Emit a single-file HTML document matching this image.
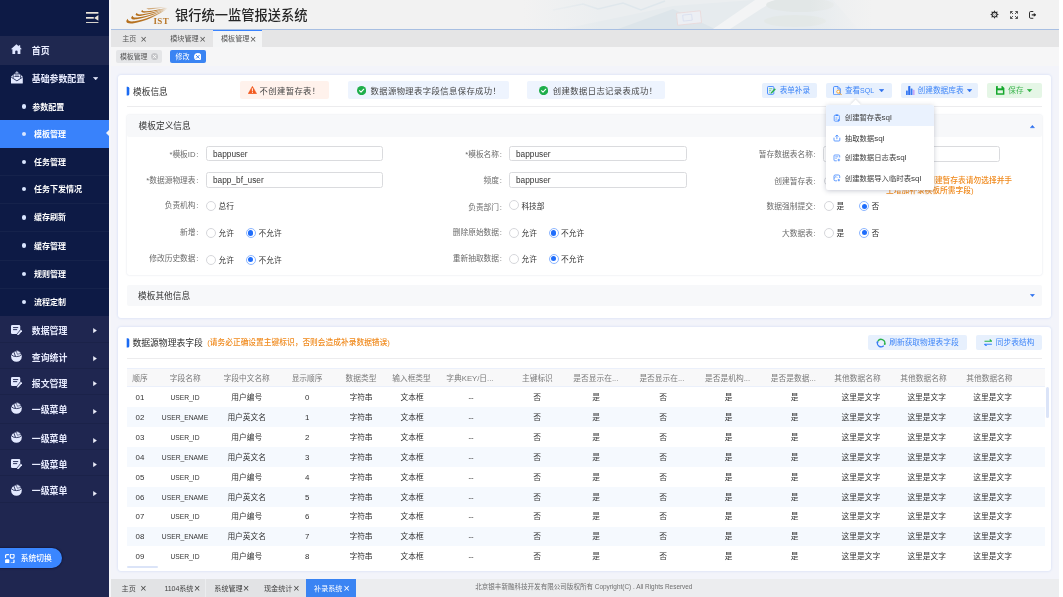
<!DOCTYPE html>
<html lang="zh-CN">
<head>
<meta charset="utf-8">
<title>银行统一监管报送系统</title>
<style>
*{box-sizing:border-box;margin:0;padding:0}
html,body{width:1063px;height:597px;overflow:hidden;background:#fff}
body{font-family:"Liberation Sans","Noto Sans CJK SC",sans-serif;color:#333;font-size:7.72px;line-height:1}
#page{position:absolute;left:0;top:0;width:1058.6px;height:597px;background:#f3f4fa;overflow:hidden;will-change:transform;opacity:.999}
.abs{position:absolute}
.t{position:absolute;white-space:nowrap;line-height:12px;height:12px;margin-top:-6px}
.c{transform:translateX(-50%)}
.r{transform:translateX(-100%)}
/* sidebar */
#side{position:absolute;left:0;top:0;width:109.1px;height:597px;background:#1f2650}
#side .dark{position:absolute;left:0;width:109.1px;background:#0d1a45}
#side .m{color:#e8ecff;font-weight:bold;font-size:8.9px}
#side .s{color:#fff;font-weight:bold;font-size:8px;left:33.9px}
#side .dot{position:absolute;left:21.7px;width:4.4px;height:4.4px;border-radius:50%;background:#d9e5ff;margin-top:-2.2px}
#side .sep{position:absolute;left:0;width:109.1px;height:1px;background:rgba(255,255,255,.035)}
#side .sep2{position:absolute;left:0;width:109.1px;height:1px;background:rgba(0,0,20,.1)}
.arrow{position:absolute;left:93.3px;width:0;height:0;border-left:3.6px solid #f0f2ff;border-top:2.6px solid transparent;border-bottom:2.6px solid transparent;margin-top:-2.6px}
/* header */
#hdr{position:absolute;left:109.1px;top:0;width:949.5px;height:29.8px;background:#f2f2f2;border-bottom:1px solid #a8bfe2;overflow:hidden}
#tabs{position:absolute;left:109.1px;top:29.8px;width:949.5px;height:17.6px;background:#e5e5e6}
#tags{position:absolute;left:109.1px;top:47.4px;width:949.5px;height:18.5px;background:#f6f6f7}
.card{position:absolute;left:118px;width:933.1px;background:#fff;border-radius:3px;box-shadow:0 0 2.5px rgba(190,205,245,.75)}
.bar{position:absolute;left:126.6px;width:1.9px;background:#2f7bf6;border-radius:1px}
.hline{position:absolute;left:127px;width:915px;height:1px;background:#ececee}
.btn{position:absolute;top:83px;height:15.2px;border-radius:2px;background:#e7f0fd}
.btn .t{top:7.6px;color:#4a8df5;font-size:7.6px}
.lab{color:#6b6b6b;font-size:7.72px}
.inp{position:absolute;height:15.6px;border:1px solid #dadbde;border-radius:2.5px;background:#fff}
.inp .t{left:6px;top:7.1px;font-size:8.3px;color:#333}
.rad{position:absolute;width:10px;height:10px;border-radius:50%;border:.9px solid #d6d7db;background:#fff;margin:-5px 0 0 -5px}
.rad.on{border-color:#8cb6ff}
.rad.on:after{content:"";position:absolute;left:1.5px;top:1.5px;width:5.2px;height:5.2px;border-radius:50%;background:#1f6dfb}
.rl{color:#333;font-size:7.72px}
.alert{position:absolute;top:80.6px;height:18.9px;border-radius:2px}
.alert .t{top:9.6px;font-size:8.3px;color:#444;letter-spacing:.35px}
.panelh{position:absolute;left:126.6px;width:915.6px;background:#f7f8fa;border-radius:2px}
.th{color:#7a7a7a;font-size:7.72px}
.td{color:#333;font-size:7.72px}
.row{position:absolute;left:126.6px;width:918.6px;height:19.85px}
.row.alt{background:#f5f9fe}
.lab i{font-style:normal;margin-left:.7px;margin-right:.3px}

</style>
</head>
<body>
<div id="page">
<div id="side">
<div class="dark" style="top:0;height:36px"></div>
<div class="abs" style="left:0;top:36px;width:109.1px;height:29px;background:#1f2850"></div>
<div class="dark" style="top:65px;height:251.4px"></div>
<svg class="abs" style="left:86.3px;top:11.7px" width="12.4" height="11.8" viewBox="0 0 12.4 11.8"><g fill="#ece6da"><rect x="0" y="0" width="12.4" height="1.7"/><rect x="0" y="5" width="7.8" height="1.7"/><rect x="0" y="10.1" width="12.4" height="1.7"/><path d="M12.4 3 L12.4 8.8 L8.2 5.9 Z"/></g></svg>
<svg class="abs" style="left:11.2px;top:43.8px" width="10.8" height="10.6" viewBox="0 0 21.6 21.2"><path fill="#dfe6ff" d="M10.8 0.4 L15.6 4.6 L15.6 2.4 L18.4 2.4 L18.4 7 L21.4 9.8 L21.4 10.6 L18.8 10.6 L18.8 21 L13.2 21 L13.2 14.6 Q13.2 12.8 10.8 12.8 Q8.4 12.8 8.4 14.6 L8.4 21 L2.8 21 L2.8 10.6 L0.2 10.6 L0.2 9.8 Z"/></svg>
<div class="t m" style="left:31.8px;top:50.7px;">首页</div>

<svg class="abs" style="left:10.9px;top:71.4px" width="11.8" height="12.8" viewBox="0 0 24 26"><path d="M0 11.5 L12 0.6 L24 11.5 V24.4 Q24 25.6 22.8 25.6 H1.2 Q0 25.6 0 24.4 Z" fill="#e3e9ff"/><g fill="none" stroke="#0d1a45" stroke-width="1.5"><path d="M4.6 14 V9 Q4.6 4.2 12 4.2 Q19.4 4.2 19.4 9 V14"/><path d="M8 8 H16 M7 11.2 H17"/><path d="M0.4 12.6 L12 20 L23.6 12.6" stroke-width="1.7"/></g></svg>
<div class="t m" style="left:31.8px;top:79.2px;">基础参数配置</div>

<svg class="abs" style="left:92.60px;top:76.80px" width="5.4" height="3.2" viewBox="0 0 10 6"><path d="M0.5 0.4 H9.5 L5 5.6 Z" fill="#e8ecff" stroke="#e8ecff" stroke-width=".8" stroke-linejoin="round"/></svg>
<div class="dot" style="top:106.40px"></div>
<div class="t s" style="left:32.2px;top:108.3px;">参数配置</div>

<div class="abs" style="left:0;top:119.85px;width:109.1px;height:28.05px;background:#3982fb"></div>
<div class="abs" style="left:105.6px;top:129.9px;width:0;height:0;border-right:3.6px solid #f3f4fa;border-top:3.9px solid transparent;border-bottom:3.9px solid transparent"></div>
<div class="dot" style="top:133.90px"></div>
<div class="t s" style="left:33.9px;top:134.8px;">模板管理</div>

<div class="dot" style="top:162.10px"></div>
<div class="t s" style="left:33.9px;top:163.0px;">任务管理</div>

<div class="sep" style="top:175.00px"></div>
<div class="dot" style="top:189.10px"></div>
<div class="t s" style="left:33.9px;top:190.0px;">任务下发情况</div>

<div class="sep" style="top:203.10px"></div>
<div class="dot" style="top:217.40px"></div>
<div class="t s" style="left:33.9px;top:218.3px;">缓存刷新</div>

<div class="sep" style="top:230.70px"></div>
<div class="dot" style="top:245.60px"></div>
<div class="t s" style="left:33.9px;top:246.5px;">缓存管理</div>

<div class="sep" style="top:259.50px"></div>
<div class="dot" style="top:273.70px"></div>
<div class="t s" style="left:33.9px;top:274.6px;">规则管理</div>

<div class="sep" style="top:288.00px"></div>
<div class="dot" style="top:301.90px"></div>
<div class="t s" style="left:33.9px;top:302.8px;">流程定制</div>

<svg class="abs" style="left:11px;top:324.6px" width="11.3" height="10.9" viewBox="0 0 22 21.2"><path fill="#e3e9ff" d="M2.5 0 H15.5 Q18 0 18 2.5 V9 L11 17.5 H2.5 Q0 17.5 0 15 V2.5 Q0 0 2.5 0 Z"/><path d="M4 5 H14 M4 9 H12" stroke="#1f2650" stroke-width="1.8" fill="none"/><path fill="#e3e9ff" d="M19.3 9.3 L21.8 11.8 L14.6 19.8 L11.4 20.9 L12.3 17.4 Z"/></svg>
<div class="t m" style="left:31.8px;top:330.9px;">数据管理</div>

<svg class="abs" style="left:92.7px;top:327.80px" width="3.9" height="5.2" viewBox="0 0 7.8 10.4"><path d="M0.6 0.8 L7.2 5.2 L0.6 9.6 Z" fill="#f2f4ff" stroke="#f2f4ff" stroke-width=".8" stroke-linejoin="round"/></svg>
<svg class="abs" style="left:11.2px;top:350.0px" width="10.9" height="11.95" viewBox="0 0 20.8 22.8"><circle cx="10.4" cy="12.4" r="10.2" fill="#e3e9ff"/><path d="M0.6 8.6 Q3 12.6 10.4 12.6 Q17.6 12.6 20 8.6" fill="none" stroke="#1f2650" stroke-width="1.7"/><path d="M5.2 3.2 L8.4 11.6" stroke="#1f2650" stroke-width="1.7"/><path d="M9.4 0.4 L12.2 8.2 L19 6.4 Q16.8 1.2 9.4 0.4 Z" fill="#e3e9ff" stroke="#1f2650" stroke-width="1.1"/></svg>
<div class="t m" style="left:31.8px;top:357.7px;">查询统计</div>

<svg class="abs" style="left:92.7px;top:356.40px" width="3.9" height="5.2" viewBox="0 0 7.8 10.4"><path d="M0.6 0.8 L7.2 5.2 L0.6 9.6 Z" fill="#f2f4ff" stroke="#f2f4ff" stroke-width=".8" stroke-linejoin="round"/></svg>
<svg class="abs" style="left:11px;top:377.4px" width="11.3" height="10.9" viewBox="0 0 22 21.2"><path fill="#e3e9ff" d="M2.5 0 H15.5 Q18 0 18 2.5 V9 L11 17.5 H2.5 Q0 17.5 0 15 V2.5 Q0 0 2.5 0 Z"/><path d="M4 5 H14 M4 9 H12" stroke="#1f2650" stroke-width="1.8" fill="none"/><path fill="#e3e9ff" d="M19.3 9.3 L21.8 11.8 L14.6 19.8 L11.4 20.9 L12.3 17.4 Z"/></svg>
<div class="t m" style="left:31.8px;top:383.7px;">报文管理</div>

<svg class="abs" style="left:92.7px;top:380.60px" width="3.9" height="5.2" viewBox="0 0 7.8 10.4"><path d="M0.6 0.8 L7.2 5.2 L0.6 9.6 Z" fill="#f2f4ff" stroke="#f2f4ff" stroke-width=".8" stroke-linejoin="round"/></svg>
<svg class="abs" style="left:11.2px;top:401.9px" width="10.9" height="11.95" viewBox="0 0 20.8 22.8"><circle cx="10.4" cy="12.4" r="10.2" fill="#e3e9ff"/><path d="M0.6 8.6 Q3 12.6 10.4 12.6 Q17.6 12.6 20 8.6" fill="none" stroke="#1f2650" stroke-width="1.7"/><path d="M5.2 3.2 L8.4 11.6" stroke="#1f2650" stroke-width="1.7"/><path d="M9.4 0.4 L12.2 8.2 L19 6.4 Q16.8 1.2 9.4 0.4 Z" fill="#e3e9ff" stroke="#1f2650" stroke-width="1.1"/></svg>
<div class="t m" style="left:31.8px;top:409.6px;">一级菜单</div>

<svg class="abs" style="left:92.7px;top:409.00px" width="3.9" height="5.2" viewBox="0 0 7.8 10.4"><path d="M0.6 0.8 L7.2 5.2 L0.6 9.6 Z" fill="#f2f4ff" stroke="#f2f4ff" stroke-width=".8" stroke-linejoin="round"/></svg>
<svg class="abs" style="left:11.2px;top:430.9px" width="10.9" height="11.95" viewBox="0 0 20.8 22.8"><circle cx="10.4" cy="12.4" r="10.2" fill="#e3e9ff"/><path d="M0.6 8.6 Q3 12.6 10.4 12.6 Q17.6 12.6 20 8.6" fill="none" stroke="#1f2650" stroke-width="1.7"/><path d="M5.2 3.2 L8.4 11.6" stroke="#1f2650" stroke-width="1.7"/><path d="M9.4 0.4 L12.2 8.2 L19 6.4 Q16.8 1.2 9.4 0.4 Z" fill="#e3e9ff" stroke="#1f2650" stroke-width="1.1"/></svg>
<div class="t m" style="left:31.8px;top:438.6px;">一级菜单</div>

<svg class="abs" style="left:92.7px;top:437.70px" width="3.9" height="5.2" viewBox="0 0 7.8 10.4"><path d="M0.6 0.8 L7.2 5.2 L0.6 9.6 Z" fill="#f2f4ff" stroke="#f2f4ff" stroke-width=".8" stroke-linejoin="round"/></svg>
<svg class="abs" style="left:11px;top:458.6px" width="11.3" height="10.9" viewBox="0 0 22 21.2"><path fill="#e3e9ff" d="M2.5 0 H15.5 Q18 0 18 2.5 V9 L11 17.5 H2.5 Q0 17.5 0 15 V2.5 Q0 0 2.5 0 Z"/><path d="M4 5 H14 M4 9 H12" stroke="#1f2650" stroke-width="1.8" fill="none"/><path fill="#e3e9ff" d="M19.3 9.3 L21.8 11.8 L14.6 19.8 L11.4 20.9 L12.3 17.4 Z"/></svg>
<div class="t m" style="left:31.8px;top:464.9px;">一级菜单</div>

<svg class="abs" style="left:92.7px;top:462.20px" width="3.9" height="5.2" viewBox="0 0 7.8 10.4"><path d="M0.6 0.8 L7.2 5.2 L0.6 9.6 Z" fill="#f2f4ff" stroke="#f2f4ff" stroke-width=".8" stroke-linejoin="round"/></svg>
<svg class="abs" style="left:11.2px;top:483.7px" width="10.9" height="11.95" viewBox="0 0 20.8 22.8"><circle cx="10.4" cy="12.4" r="10.2" fill="#e3e9ff"/><path d="M0.6 8.6 Q3 12.6 10.4 12.6 Q17.6 12.6 20 8.6" fill="none" stroke="#1f2650" stroke-width="1.7"/><path d="M5.2 3.2 L8.4 11.6" stroke="#1f2650" stroke-width="1.7"/><path d="M9.4 0.4 L12.2 8.2 L19 6.4 Q16.8 1.2 9.4 0.4 Z" fill="#e3e9ff" stroke="#1f2650" stroke-width="1.1"/></svg>
<div class="t m" style="left:31.8px;top:491.4px;">一级菜单</div>

<svg class="abs" style="left:92.7px;top:490.80px" width="3.9" height="5.2" viewBox="0 0 7.8 10.4"><path d="M0.6 0.8 L7.2 5.2 L0.6 9.6 Z" fill="#f2f4ff" stroke="#f2f4ff" stroke-width=".8" stroke-linejoin="round"/></svg>
<div class="sep2" style="top:342.2px"></div>
<div class="sep2" style="top:368.1px"></div>
<div class="sep2" style="top:394.3px"></div>
<div class="sep2" style="top:422.8px"></div>
<div class="sep2" style="top:449.2px"></div>
<div class="sep2" style="top:474.9px"></div>
<div class="sep2" style="top:502.3px"></div>
<div class="abs" style="left:-12px;top:547.5px;width:73.7px;height:20.2px;border-radius:10.1px;background:#3a86ff;box-shadow:0 0 1.5px 0.6px rgba(10,12,40,.7)"></div>
<svg class="abs" style="left:5px;top:553.6px" width="9.6" height="9.6" viewBox="0 0 19.2 19.2"><g fill="none" stroke="#fff" stroke-width="2.4" stroke-linecap="round"><path d="M1.2 7 V3.5 Q1.2 1.2 3.5 1.2 H7"/><path d="M18 12.2 V15.7 Q18 18 15.7 18 H12.2"/></g><rect x="10.6" y="0.6" width="7.6" height="7.6" rx="2" fill="none" stroke="#fff" stroke-width="2.2"/><rect x="0.2" y="10.6" width="8.4" height="8.4" rx="2" fill="#fff"/></svg>
<div class="t " style="left:20.8px;top:558.6px;color:#fff;font-size:7.75px;font-weight:500">系统切换</div>

</div>
<div id="hdr">
<svg class="abs" style="left:414px;top:0" width="350" height="29" viewBox="0 0 350 29"><defs><linearGradient id="fd" x1="0" x2="1"><stop offset="0" stop-color="#f2f2f2" stop-opacity="1"/><stop offset=".22" stop-color="#f2f2f2" stop-opacity="0"/><stop offset=".82" stop-color="#f2f2f2" stop-opacity="0"/><stop offset="1" stop-color="#f2f2f2" stop-opacity="1"/></linearGradient></defs><rect width="350" height="29" fill="#ebeef0"/><path d="M40 29 L150 6 L230 0 L310 0 L335 29 Z" fill="#e6ebee"/><path d="M95 29 L150 9 L192 29 Z" fill="#dde5ea"/><path d="M30 10 L60 4 L75 9 L100 3 L118 10 L142 1" fill="none" stroke="#dfe7ec" stroke-width="1.6"/><path d="M190 29 L232 0 L252 0 L207 29 Z" fill="#f3f4f5"/><rect x="154" y="12" width="24" height="12" fill="#eceff4" stroke="#ead6d6" stroke-width=".7" transform="rotate(-6 166 18)"/><rect x="160" y="14.5" width="9" height="6" fill="none" stroke="#d5dcee" stroke-width=".7" transform="rotate(-6 166 18)"/><ellipse cx="277" cy="5" rx="34" ry="7" fill="#e2e7e7"/><ellipse cx="272" cy="21" rx="31" ry="6" fill="#e3e8e7"/><rect width="350" height="29" fill="url(#fd)"/></svg>
<svg class="abs" style="left:8.9px;top:2px" width="60" height="26" viewBox="0 0 1063 461"><defs><linearGradient id="lg" x1="0" x2="1" y1="0" y2="0"><stop offset="0" stop-color="#b56f1c"/><stop offset=".55" stop-color="#b9782a"/><stop offset=".85" stop-color="#c99a5e" stop-opacity=".75"/><stop offset="1" stop-color="#d8b78a" stop-opacity=".25"/></linearGradient></defs><g fill="url(#lg)"><path d="M175 298 C130 330 130 395 260 380 C480 352 720 230 885 112 C700 215 470 322 290 342 C215 350 170 340 175 298 Z"/><path d="M262 243 C215 270 222 322 330 308 C510 282 730 195 885 108 C720 180 520 255 370 272 C300 280 258 275 262 243 Z"/><path d="M338 192 C298 212 300 258 395 247 C545 228 745 165 885 104 C740 152 560 205 430 217 C370 223 335 220 338 192 Z"/><path d="M435 142 C400 158 405 196 485 188 C600 175 765 135 885 100 C765 124 620 155 510 162 C460 166 432 165 435 142 Z"/><path d="M500 112 C620 100 780 96 885 97 C780 104 640 118 540 132 Z" opacity=".55"/></g></svg>
<div class="t" style="left:44.4px;top:20.9px;font-family:'Liberation Serif',serif;font-weight:bold;font-size:9px;color:#b9782a;letter-spacing:.35px">IST</div>
<div class="t" style="left:65.9px;top:15.7px;font-size:13.25px;line-height:18px;height:18px;margin-top:-9px;color:#262626;font-weight:500">银行统一监管报送系统</div>
<svg class="abs" style="left:880.8px;top:10.4px" width="9" height="9" viewBox="0 0 24 24"><path d="M12.00 0.40 L14.83 5.16 L20.20 3.80 L18.84 9.17 L23.60 12.00 L18.84 14.83 L20.20 20.20 L14.83 18.84 L12.00 23.60 L9.17 18.84 L3.80 20.20 L5.16 14.83 L0.40 12.00 L5.16 9.17 L3.80 3.80 L9.17 5.16 Z" fill="#2b2b2b"/><circle cx="12" cy="12" r="5" fill="#f2f2f2"/><circle cx="12" cy="12" r="2.6" fill="none" stroke="#555" stroke-width="1.2"/></svg>
<svg class="abs" style="left:900.7px;top:10.8px" width="8" height="8" viewBox="0 0 16 16"><g fill="none" stroke="#2b2b2b" stroke-width="1.6"><path d="M1 5.4 V1 H5.4 M1.4 1.4 L6 6"/><path d="M15 5.4 V1 H10.6 M14.6 1.4 L10 6"/><path d="M1 10.6 V15 H5.4 M1.4 14.6 L6 10"/><path d="M15 10.6 V15 H10.6 M14.6 14.6 L10 10"/></g></svg>
<svg class="abs" style="left:919.8px;top:10.9px" width="7.4" height="7.8" viewBox="0 0 14.8 15.6"><path d="M8.6 1 H3.4 Q1 1 1 3.4 V12.2 Q1 14.6 3.4 14.6 H8.6" fill="none" stroke="#2b2b2b" stroke-width="2"/><path d="M5.4 6.7 H9.6 V4 L14.8 7.8 L9.6 11.6 V8.9 H5.4 Z" fill="#2b2b2b"/></svg>
</div>
<div id="tabs">
<div class="abs" style="left:104px;top:0;width:49.4px;height:18.2px;background:#f4f5f6;border-top:1px solid #3a84ff"></div>
<div class="t " style="left:13.1px;top:9.6px;color:#555;font-size:7.1px">主页</div>

<div class="t c " style="left:34.4px;top:8.8px;color:#555;font-size:10.6px">×</div>

<div class="t " style="left:61.2px;top:9.6px;color:#555;font-size:7.1px">模块管理</div>

<div class="t c " style="left:93.4px;top:8.8px;color:#555;font-size:10.6px">×</div>

<div class="t " style="left:111.9px;top:9.6px;color:#555;font-size:7.1px">模板管理</div>

<div class="t c " style="left:144px;top:8.8px;color:#555;font-size:10.6px">×</div>

</div>
<div id="tags">
<div class="abs" style="left:7.2px;top:2.6px;width:45.5px;height:12.6px;border-radius:2px;background:#e5e6e8"></div>
<div class="t " style="left:10.8px;top:9.9px;color:#555;font-size:6.9px">模板管理</div>

<svg class="abs" style="left:41.7px;top:5.7px" width="7.2" height="7.2" viewBox="0 0 14 14"><circle cx="7" cy="7" r="7" fill="#c4c5c8"/><path d="M4.4 4.4 L9.6 9.6 M9.6 4.4 L4.4 9.6" stroke="#fff" stroke-width="1.6" stroke-linecap="round"/></svg>
<div class="abs" style="left:60.8px;top:2.6px;width:35.9px;height:12.6px;border-radius:2px;background:#3a84f3"></div>
<div class="t " style="left:66.5px;top:9.9px;color:#fff;font-size:7px">修改</div>

<svg class="abs" style="left:84.6px;top:5.5px" width="7.6" height="7.6" viewBox="0 0 14 14"><circle cx="7" cy="7" r="7" fill="#fff"/><path d="M4.4 4.4 L9.6 9.6 M9.6 4.4 L4.4 9.6" stroke="#3a84f3" stroke-width="1.8" stroke-linecap="round"/></svg>
</div>
<div class="card" style="top:75px;height:243.4px"></div>
<div class="card" style="top:327.4px;height:243.2px"></div>
<svg class="abs" style="left:126px;top:86px" width="5" height="11" viewBox="0 0 5 11"><path transform="translate(0.7 0.80)" d="M0 0 H1.1 Q2.6 0 2.6 1.5 V7.30 Q2.6 8.8 1.1 8.8 H0 Z" fill="#1a6af2"/></svg>
<div class="t " style="left:133px;top:91.7px;font-size:8.7px;color:#333">模板信息</div>

<div class="hline" style="top:105.8px"></div>
<div class="alert" style="left:239.7px;width:89.3px;background:#fff2ec"></div>
<svg class="abs" style="left:248.4px;top:85.8px" width="8.8" height="8" viewBox="0 0 16.8 15.2"><path d="M8.4 0.6 L16.4 14.6 H0.4 Z" fill="#f2581d" stroke="#f2581d" stroke-width="1" stroke-linejoin="round"/><path d="M8.4 5 V9.6" stroke="#fff" stroke-width="1.8" stroke-linecap="round"/><circle cx="8.4" cy="12.2" r="1" fill="#fff"/></svg>
<div class="t " style="left:259.6px;top:90.8px;font-size:8.3px;color:#444;letter-spacing:.4px">不创建暂存表！</div>

<div class="alert" style="left:348.3px;width:161.2px;background:#eef4fe"></div>
<svg class="abs" style="left:356.8px;top:86.1px" width="9.2" height="9.2" viewBox="0 0 16 16"><circle cx="8" cy="8" r="8" fill="#1fae4b"/><path d="M4.3 8.2 L7 10.8 L11.8 5.6" fill="none" stroke="#fff" stroke-width="1.9" stroke-linecap="round" stroke-linejoin="round"/></svg>
<div class="t " style="left:370.5px;top:90.8px;font-size:8.3px;color:#444;letter-spacing:.42px">数据源物理表字段信息保存成功！</div>

<div class="alert" style="left:527.3px;width:137.4px;background:#eef4fe"></div>
<svg class="abs" style="left:538.9px;top:86.1px" width="9.2" height="9.2" viewBox="0 0 16 16"><circle cx="8" cy="8" r="8" fill="#1fae4b"/><path d="M4.3 8.2 L7 10.8 L11.8 5.6" fill="none" stroke="#fff" stroke-width="1.9" stroke-linecap="round" stroke-linejoin="round"/></svg>
<div class="t " style="left:552.8px;top:90.8px;font-size:8.3px;color:#444;letter-spacing:.42px">创建数据日志记录表成功！</div>

<div class="btn" style="left:761.8px;width:55px"></div>
<svg class="abs" style="left:767.4px;top:86.2px" width="9" height="9" viewBox="0 0 18 18"><rect x="1" y="1" width="12.6" height="15.6" rx="1.8" fill="none" stroke="#3a84ff" stroke-width="1.8"/><path d="M4 5.4 H10.6 M4 8.8 H8.4 M4 12.2 H6.6" stroke="#5cc477" stroke-width="1.5"/><path d="M15.4 4.6 L17.6 6.8 L10 14.6 L7.2 15.4 L7.9 12.4 Z" fill="#27b14a"/></svg>
<div class="t " style="left:779.7px;top:91.2px;color:#3f86f8;font-size:7.6px">表单补录</div>

<div class="btn" style="left:825.8px;width:66.1px"></div>
<svg class="abs" style="left:833px;top:86px" width="9" height="9.4" viewBox="0 0 18 18.8"><path d="M3.4 1 H10 L14.6 5.6 V15.4 Q14.6 17.6 12.4 17.6 H3.4 Q1 17.6 1 15.4 V3.4 Q1 1 3.4 1 Z" fill="none" stroke="#3a84ff" stroke-width="1.8"/><path d="M9.6 1.4 V6 H14.2" fill="none" stroke="#3a84ff" stroke-width="1.4"/><circle cx="10.6" cy="11.4" r="3.1" fill="#fff" stroke="#f39a1e" stroke-width="1.7"/><path d="M12.9 13.7 L16.6 17.4" stroke="#f39a1e" stroke-width="2" stroke-linecap="round"/></svg>
<div class="t " style="left:844.9px;top:91.2px;color:#3f86f8;font-size:7.6px">查看<span style="font-size:7px">SQL</span></div>

<svg class="abs" style="left:879.00px;top:88.90px" width="5.2" height="3.2" viewBox="0 0 10 6"><path d="M0.5 0.4 H9.5 L5 5.6 Z" fill="#2b6fee" stroke="#2b6fee" stroke-width=".8" stroke-linejoin="round"/></svg>
<div class="btn" style="left:900.6px;width:77.2px"></div>
<svg class="abs" style="left:906px;top:85.8px" width="8.6" height="9.4" viewBox="0 0 17.2 18.8"><rect x="0" y="9" width="3.6" height="9.8" rx=".8" fill="#3a7df5"/><rect x="4.4" y="0" width="4.2" height="18.8" rx=".8" fill="#2f6fee"/><rect x="9.4" y="5" width="3.6" height="13.8" rx=".8" fill="#3a7df5"/><rect x="13.6" y="7.4" width="3.6" height="11.4" rx=".8" fill="#c9a6f5"/></svg>
<div class="t " style="left:917.6px;top:91.2px;color:#3f86f8;font-size:7.68px">创建数据库表</div>

<svg class="abs" style="left:967.20px;top:88.90px" width="5.2" height="3.2" viewBox="0 0 10 6"><path d="M0.5 0.4 H9.5 L5 5.6 Z" fill="#2b6fee" stroke="#2b6fee" stroke-width=".8" stroke-linejoin="round"/></svg>
<div class="btn" style="left:987px;width:54.8px;background:#e5f6e6"></div>
<svg class="abs" style="left:996.2px;top:86.2px" width="8.4" height="8.8" viewBox="0 0 16.8 17.6"><path d="M1.2 0 H12.6 L16.8 4.2 V16.4 Q16.8 17.6 15.6 17.6 H1.2 Q0 17.6 0 16.4 V1.2 Q0 0 1.2 0 Z" fill="#16a82d"/><rect x="3.6" y="0" width="7.4" height="4.6" fill="#e5f6e6"/><rect x="3" y="8.6" width="10.8" height="6" fill="#e5f6e6"/></svg>
<div class="t " style="left:1008.3px;top:91.2px;color:#3db54f;font-size:7.6px">保存</div>

<svg class="abs" style="left:1027.40px;top:88.90px" width="5.2" height="3.2" viewBox="0 0 10 6"><path d="M0.5 0.4 H9.5 L5 5.6 Z" fill="#2cb140" stroke="#2cb140" stroke-width=".8" stroke-linejoin="round"/></svg>
<div class="abs" style="left:126.6px;top:114.6px;width:915.6px;height:160.4px;background:#fff;border-radius:2px;box-shadow:0 0 2px rgba(200,205,220,.7)"></div>
<div class="panelh" style="top:114.6px;height:22.2px"></div>
<div class="t " style="left:138.6px;top:126.3px;font-size:8.7px;color:#333">模板定义信息</div>

<svg class="abs" style="left:1030.40px;top:125.45px" width="4.8" height="3.1" viewBox="0 0 10 6"><path d="M0.5 5.6 H9.5 L5 0.4 Z" fill="#2b6fee" stroke="#2b6fee" stroke-width=".8" stroke-linejoin="round"/></svg>
<div class="t r lab" style="left:198.7px;top:154.8px;">*模板ID<i>:</i></div>

<div class="inp" style="left:206px;top:145.8px;width:176.8px"><div class="t">bappuser</div></div>
<div class="t r lab" style="left:198.7px;top:181.4px;">*数据源物理表<i>:</i></div>

<div class="inp" style="left:206px;top:172.3px;width:176.8px"><div class="t">bapp_bf_user</div></div>
<div class="t r lab" style="left:198.7px;top:206.4px;">负责机构<i>:</i></div>

<div class="rad" style="left:210.9px;top:205.6px"></div>
<div class="t rl" style="left:218.5px;top:206.6px;">总行</div>

<div class="t r lab" style="left:198.7px;top:233.4px;">新增<i>:</i></div>

<div class="rad" style="left:210.9px;top:232.9px"></div>
<div class="t rl" style="left:218.5px;top:233.8px;">允许</div>

<div class="rad on" style="left:250.7px;top:232.9px"></div>
<div class="t rl" style="left:258.6px;top:233.8px;">不允许</div>

<div class="t r lab" style="left:198.7px;top:259.1px;">修改历史数据<i>:</i></div>

<div class="rad" style="left:210.9px;top:259.8px"></div>
<div class="t rl" style="left:218.5px;top:260.7px;">允许</div>

<div class="rad on" style="left:250.7px;top:259.8px"></div>
<div class="t rl" style="left:258.6px;top:260.7px;">不允许</div>

<div class="t r lab" style="left:502.2px;top:154.8px;">*模板名称<i>:</i></div>

<div class="inp" style="left:509px;top:145.8px;width:177.5px"><div class="t">bappuser</div></div>
<div class="t r lab" style="left:502.2px;top:181.4px;">频度<i>:</i></div>

<div class="inp" style="left:509px;top:172.3px;width:177.5px"><div class="t">bappuser</div></div>
<div class="t r lab" style="left:502.2px;top:207.6px;">负责部门<i>:</i></div>

<div class="rad" style="left:513.7px;top:205.4px"></div>
<div class="t rl" style="left:521.4px;top:206.9px;">科技部</div>

<div class="t r lab" style="left:502.2px;top:233.4px;">删除原始数据<i>:</i></div>

<div class="rad" style="left:513.7px;top:232.9px"></div>
<div class="t rl" style="left:521.6px;top:233.8px;">允许</div>

<div class="rad on" style="left:553.5px;top:232.9px"></div>
<div class="t rl" style="left:561.1px;top:233.8px;">不允许</div>

<div class="t r lab" style="left:502.2px;top:259.1px;">重新抽取数据<i>:</i></div>

<div class="rad" style="left:513.7px;top:258.8px"></div>
<div class="t rl" style="left:521.6px;top:259.8px;">允许</div>

<div class="rad on" style="left:553.5px;top:258.8px"></div>
<div class="t rl" style="left:561.1px;top:259.8px;">不允许</div>

<div class="t r lab" style="left:816px;top:155.2px;">暂存数据表名称<i>:</i></div>

<div class="inp" style="left:823px;top:146.2px;width:177px"><div class="t"></div></div>
<div class="t r lab" style="left:816px;top:181.8px;">创建暂存表<i>:</i></div>

<div class="rad" style="left:828.7px;top:181px"></div>
<div class="t rl" style="left:836.6px;top:181.9px;">是</div>

<div class="rad on" style="left:864px;top:181px"></div>
<div class="t rl" style="left:871.6px;top:181.9px;">否</div>

<div class="t " style="left:886px;top:181px;color:#f08a1d;font-size:7.72px;font-weight:500">(注意：如不创建暂存表请勿选择并手</div>

<div class="t " style="left:886px;top:191.4px;color:#f08a1d;font-size:7.72px;font-weight:500">工增加补录模板所需字段)</div>

<div class="t r lab" style="left:816px;top:206.8px;">数据强制提交<i>:</i></div>

<div class="rad" style="left:828.7px;top:206px"></div>
<div class="t rl" style="left:836.6px;top:206.9px;">是</div>

<div class="rad on" style="left:864px;top:206px"></div>
<div class="t rl" style="left:871.6px;top:206.9px;">否</div>

<div class="t r lab" style="left:816px;top:233.5px;">大数据表<i>:</i></div>

<div class="rad" style="left:828.7px;top:232.7px"></div>
<div class="t rl" style="left:836.6px;top:233.6px;">是</div>

<div class="rad on" style="left:864px;top:232.7px"></div>
<div class="t rl" style="left:871.6px;top:233.6px;">否</div>

<div class="panelh" style="top:285.4px;height:20.3px"></div>
<div class="t " style="left:138px;top:295.9px;font-size:8.7px;color:#333">模板其他信息</div>

<svg class="abs" style="left:1030.40px;top:293.75px" width="4.8" height="3.1" viewBox="0 0 10 6"><path d="M0.5 0.4 H9.5 L5 5.6 Z" fill="#2b6fee" stroke="#2b6fee" stroke-width=".8" stroke-linejoin="round"/></svg>
<div class="abs" style="left:825.9px;top:105px;width:108.6px;height:84.8px;background:#fff;border-radius:2px;box-shadow:0 1px 5px rgba(60,70,100,.28)"></div>
<div class="abs" style="left:852.4px;top:101.3px;width:7.2px;height:7.2px;background:#fff;transform:rotate(45deg);box-shadow:-1px -1px 2px rgba(60,70,100,.14)"></div>
<div class="abs" style="left:825.9px;top:105.4px;width:108.6px;height:20.6px;background:#eaf2fe;border-radius:2px 2px 0 0"></div>
<svg class="abs" style="left:832.8px;top:113.8px" width="7.8" height="7.8" viewBox="0 0 15.6 15.6"><rect x="2.4" y="2.4" width="10.4" height="12" rx="2" fill="none" stroke="#3a84ff" stroke-width="1.5"/><rect x="5" y="1" width="5.2" height="3" rx=".8" fill="#3a84ff"/><path d="M5.2 8 H8.6 M5.2 11 H7" stroke="#3a84ff" stroke-width="1.3"/><path d="M11 10.4 V14.4 M9 12.4 H13" stroke="#3a84ff" stroke-width="1.4"/></svg>
<div class="t " style="left:844.8px;top:118.1px;color:#3c3c3c;font-size:7.36px">创建暂存表<span style="font-size:8px">sql</span></div>

<svg class="abs" style="left:832.8px;top:134.2px" width="7.8" height="7.8" viewBox="0 0 15.6 15.6"><path d="M2 7.4 V12.4 Q2 14 3.6 14 H12 Q13.6 14 13.6 12.4 V7.4" fill="none" stroke="#3a84ff" stroke-width="1.6"/><path d="M7.8 10.4 V2.4 M4.8 5.2 L7.8 2 L10.8 5.2" fill="none" stroke="#3a84ff" stroke-width="1.6"/></svg>
<div class="t " style="left:844.8px;top:138.5px;color:#3c3c3c;font-size:7.36px">抽取数据<span style="font-size:8px">sql</span></div>

<svg class="abs" style="left:832.8px;top:154.0px" width="7.8" height="7.8" viewBox="0 0 15.6 15.6"><path d="M13.4 7 V3.6 Q13.4 2 11.8 2 H3.6 Q2 2 2 3.6 V12 Q2 13.6 3.6 13.6 H7.6" fill="none" stroke="#3a84ff" stroke-width="1.5"/><path d="M4.6 5.6 H10.6 M4.6 8.6 H7.6" stroke="#3a84ff" stroke-width="1.3"/><path d="M11.6 9.4 V14.6 M9 12 H14.2" stroke="#3a84ff" stroke-width="1.5"/></svg>
<div class="t " style="left:844.8px;top:158.3px;color:#3c3c3c;font-size:7.36px">创建数据日志表<span style="font-size:8px">sql</span></div>

<svg class="abs" style="left:832.8px;top:174.4px" width="7.8" height="7.8" viewBox="0 0 15.6 15.6"><path d="M13.4 8 V4.4 Q13.4 2 11 2 H4.4 Q2 2 2 4.4 V11.2 Q2 13.6 4.4 13.6 H8" fill="none" stroke="#3a84ff" stroke-width="1.6"/><path d="M2.4 8.4 L6 5 L8.4 7.4" fill="none" stroke="#3a84ff" stroke-width="1.4"/><path d="M11.6 9.8 V14.6 M9.2 12.2 H14" stroke="#3a84ff" stroke-width="1.5"/></svg>
<div class="t " style="left:844.8px;top:178.70000000000002px;color:#3c3c3c;font-size:7.36px">创建数据导入临时表<span style="font-size:8px">sql</span></div>

<svg class="abs" style="left:126px;top:338px" width="5" height="12" viewBox="0 0 5 12"><path transform="translate(0.7 0.30)" d="M0 0 H1.1 Q2.6 0 2.6 1.5 V7.60 Q2.6 9.1 1.1 9.1 H0 Z" fill="#1a6af2"/></svg>
<div class="t " style="left:132.4px;top:342.8px;font-size:8.82px;color:#2a2a2a">数据源物理表字段</div>

<div class="t " style="left:207.2px;top:342.9px;font-size:7.72px;color:#f08a1d;font-weight:500">(请务必正确设置主键标识，否则会造成补录数据错误)</div>

<div class="btn" style="left:867.7px;top:335px;width:99.1px"></div>
<svg class="abs" style="left:876px;top:337.7px" width="10.2" height="10.2" viewBox="0 0 20 20"><path d="M3.6 6.3 A7.4 7.4 0 0 1 17.3 11.2" fill="none" stroke="#2bb24c" stroke-width="2.5" stroke-linecap="round"/><circle cx="17.1" cy="11.6" r="1.9" fill="#2bb24c"/><path d="M2.7 8.8 A7.4 7.4 0 0 0 14.6 15.8" fill="none" stroke="#3a7df5" stroke-width="2.5" stroke-linecap="round"/><circle cx="2.9" cy="8.4" r="1.9" fill="#3a7df5"/></svg>
<div class="t " style="left:889.2px;top:343.3px;color:#3f86f8;font-size:7.72px">刷新获取物理表字段</div>

<div class="btn" style="left:975.8px;top:335px;width:66.1px"></div>
<svg class="abs" style="left:983.6px;top:338.8px" width="8.4" height="7.6" viewBox="0 0 16.8 15.2"><path d="M1 4.6 H15.6 L11.4 1" fill="none" stroke="#27b14a" stroke-width="2.3" stroke-linejoin="round"/><path d="M15.8 10.6 H1.2 L5.4 14.2" fill="none" stroke="#3a84ff" stroke-width="2.3" stroke-linejoin="round"/></svg>
<div class="t " style="left:995.8px;top:343.3px;color:#3f86f8;font-size:7.72px">同步表结构</div>

<div class="hline" style="top:357.6px"></div>
<div class="abs" style="left:126.6px;top:367.5px;width:918.6px;height:19.8px;background:#f8f8f9;border-top:1px solid #ebf0fb;border-bottom:1px solid #ebf0fb"></div>
<div class="t c th" style="left:140px;top:378.5px;">顺序</div>

<div class="t c th" style="left:185.2px;top:378.5px;">字段名称</div>

<div class="t c th" style="left:246.7px;top:378.5px;">字段中文名称</div>

<div class="t c th" style="left:307.1px;top:378.5px;">显示顺序</div>

<div class="t c th" style="left:361px;top:378.5px;">数据类型</div>

<div class="t c th" style="left:411.5px;top:378.5px;">输入框类型</div>

<div class="t c th" style="left:469.9px;top:378.5px;">字典KEY/日...</div>

<div class="t c th" style="left:537.4px;top:378.5px;">主键标识</div>

<div class="t c th" style="left:595.8px;top:378.5px;">是否显示在...</div>

<div class="t c th" style="left:661.9px;top:378.5px;">是否显示在...</div>

<div class="t c th" style="left:727.6px;top:378.5px;">是否是机构...</div>

<div class="t c th" style="left:793.3px;top:378.5px;">是否是数据...</div>

<div class="t c th" style="left:857.5px;top:378.5px;">其他数据名称</div>

<div class="t c th" style="left:923.5px;top:378.5px;">其他数据名称</div>

<div class="t c th" style="left:989.4px;top:378.5px;">其他数据名称</div>

<div class="t c td" style="left:140px;top:398.3px;font-size:7.9px">01</div>

<div class="t c td" style="left:185.2px;top:398.3px;font-size:8px;transform:translateX(-50%) scaleX(.84)">USER_ID</div>

<div class="t c td" style="left:246.7px;top:398.3px;">用户编号</div>

<div class="t c td" style="left:307.1px;top:398.3px;font-size:7.9px">0</div>

<div class="t c td" style="left:361px;top:398.3px;">字符串</div>

<div class="t c td" style="left:412.2px;top:398.3px;">文本框</div>

<div class="t c td" style="left:471px;top:398.3px;">--</div>

<div class="t c td" style="left:537.2px;top:398.3px;">否</div>

<div class="t c td" style="left:596.2px;top:398.3px;">是</div>

<div class="t c td" style="left:663.1px;top:398.3px;">否</div>

<div class="t c td" style="left:728.6px;top:398.3px;">是</div>

<div class="t c td" style="left:794.6px;top:398.3px;">是</div>

<div class="t c td" style="left:860.9px;top:398.3px;">这里是文字</div>

<div class="t c td" style="left:926.7px;top:398.3px;">这里是文字</div>

<div class="t c td" style="left:992.6px;top:398.3px;">这里是文字</div>

<div class="row alt" style="top:407.45px"></div>
<div class="t c td" style="left:140px;top:418.15px;font-size:7.9px">02</div>

<div class="t c td" style="left:185.2px;top:418.15px;font-size:8px;transform:translateX(-50%) scaleX(.84)">USER_ENAME</div>

<div class="t c td" style="left:246.7px;top:418.15px;">用户英文名</div>

<div class="t c td" style="left:307.1px;top:418.15px;font-size:7.9px">1</div>

<div class="t c td" style="left:361px;top:418.15px;">字符串</div>

<div class="t c td" style="left:412.2px;top:418.15px;">文本框</div>

<div class="t c td" style="left:471px;top:418.15px;">--</div>

<div class="t c td" style="left:537.2px;top:418.15px;">否</div>

<div class="t c td" style="left:596.2px;top:418.15px;">是</div>

<div class="t c td" style="left:663.1px;top:418.15px;">否</div>

<div class="t c td" style="left:728.6px;top:418.15px;">是</div>

<div class="t c td" style="left:794.6px;top:418.15px;">是</div>

<div class="t c td" style="left:860.9px;top:418.15px;">这里是文字</div>

<div class="t c td" style="left:926.7px;top:418.15px;">这里是文字</div>

<div class="t c td" style="left:992.6px;top:418.15px;">这里是文字</div>

<div class="t c td" style="left:140px;top:438.0px;font-size:7.9px">03</div>

<div class="t c td" style="left:185.2px;top:438.0px;font-size:8px;transform:translateX(-50%) scaleX(.84)">USER_ID</div>

<div class="t c td" style="left:246.7px;top:438.0px;">用户编号</div>

<div class="t c td" style="left:307.1px;top:438.0px;font-size:7.9px">2</div>

<div class="t c td" style="left:361px;top:438.0px;">字符串</div>

<div class="t c td" style="left:412.2px;top:438.0px;">文本框</div>

<div class="t c td" style="left:471px;top:438.0px;">--</div>

<div class="t c td" style="left:537.2px;top:438.0px;">否</div>

<div class="t c td" style="left:596.2px;top:438.0px;">是</div>

<div class="t c td" style="left:663.1px;top:438.0px;">否</div>

<div class="t c td" style="left:728.6px;top:438.0px;">是</div>

<div class="t c td" style="left:794.6px;top:438.0px;">是</div>

<div class="t c td" style="left:860.9px;top:438.0px;">这里是文字</div>

<div class="t c td" style="left:926.7px;top:438.0px;">这里是文字</div>

<div class="t c td" style="left:992.6px;top:438.0px;">这里是文字</div>

<div class="row alt" style="top:447.15px"></div>
<div class="t c td" style="left:140px;top:457.85px;font-size:7.9px">04</div>

<div class="t c td" style="left:185.2px;top:457.85px;font-size:8px;transform:translateX(-50%) scaleX(.84)">USER_ENAME</div>

<div class="t c td" style="left:246.7px;top:457.85px;">用户英文名</div>

<div class="t c td" style="left:307.1px;top:457.85px;font-size:7.9px">3</div>

<div class="t c td" style="left:361px;top:457.85px;">字符串</div>

<div class="t c td" style="left:412.2px;top:457.85px;">文本框</div>

<div class="t c td" style="left:471px;top:457.85px;">--</div>

<div class="t c td" style="left:537.2px;top:457.85px;">否</div>

<div class="t c td" style="left:596.2px;top:457.85px;">是</div>

<div class="t c td" style="left:663.1px;top:457.85px;">否</div>

<div class="t c td" style="left:728.6px;top:457.85px;">是</div>

<div class="t c td" style="left:794.6px;top:457.85px;">是</div>

<div class="t c td" style="left:860.9px;top:457.85px;">这里是文字</div>

<div class="t c td" style="left:926.7px;top:457.85px;">这里是文字</div>

<div class="t c td" style="left:992.6px;top:457.85px;">这里是文字</div>

<div class="t c td" style="left:140px;top:477.7px;font-size:7.9px">05</div>

<div class="t c td" style="left:185.2px;top:477.7px;font-size:8px;transform:translateX(-50%) scaleX(.84)">USER_ID</div>

<div class="t c td" style="left:246.7px;top:477.7px;">用户编号</div>

<div class="t c td" style="left:307.1px;top:477.7px;font-size:7.9px">4</div>

<div class="t c td" style="left:361px;top:477.7px;">字符串</div>

<div class="t c td" style="left:412.2px;top:477.7px;">文本框</div>

<div class="t c td" style="left:471px;top:477.7px;">--</div>

<div class="t c td" style="left:537.2px;top:477.7px;">否</div>

<div class="t c td" style="left:596.2px;top:477.7px;">是</div>

<div class="t c td" style="left:663.1px;top:477.7px;">否</div>

<div class="t c td" style="left:728.6px;top:477.7px;">是</div>

<div class="t c td" style="left:794.6px;top:477.7px;">是</div>

<div class="t c td" style="left:860.9px;top:477.7px;">这里是文字</div>

<div class="t c td" style="left:926.7px;top:477.7px;">这里是文字</div>

<div class="t c td" style="left:992.6px;top:477.7px;">这里是文字</div>

<div class="row alt" style="top:486.85px"></div>
<div class="t c td" style="left:140px;top:497.55px;font-size:7.9px">06</div>

<div class="t c td" style="left:185.2px;top:497.55px;font-size:8px;transform:translateX(-50%) scaleX(.84)">USER_ENAME</div>

<div class="t c td" style="left:246.7px;top:497.55px;">用户英文名</div>

<div class="t c td" style="left:307.1px;top:497.55px;font-size:7.9px">5</div>

<div class="t c td" style="left:361px;top:497.55px;">字符串</div>

<div class="t c td" style="left:412.2px;top:497.55px;">文本框</div>

<div class="t c td" style="left:471px;top:497.55px;">--</div>

<div class="t c td" style="left:537.2px;top:497.55px;">否</div>

<div class="t c td" style="left:596.2px;top:497.55px;">是</div>

<div class="t c td" style="left:663.1px;top:497.55px;">否</div>

<div class="t c td" style="left:728.6px;top:497.55px;">是</div>

<div class="t c td" style="left:794.6px;top:497.55px;">是</div>

<div class="t c td" style="left:860.9px;top:497.55px;">这里是文字</div>

<div class="t c td" style="left:926.7px;top:497.55px;">这里是文字</div>

<div class="t c td" style="left:992.6px;top:497.55px;">这里是文字</div>

<div class="t c td" style="left:140px;top:517.4px;font-size:7.9px">07</div>

<div class="t c td" style="left:185.2px;top:517.4px;font-size:8px;transform:translateX(-50%) scaleX(.84)">USER_ID</div>

<div class="t c td" style="left:246.7px;top:517.4px;">用户编号</div>

<div class="t c td" style="left:307.1px;top:517.4px;font-size:7.9px">6</div>

<div class="t c td" style="left:361px;top:517.4px;">字符串</div>

<div class="t c td" style="left:412.2px;top:517.4px;">文本框</div>

<div class="t c td" style="left:471px;top:517.4px;">--</div>

<div class="t c td" style="left:537.2px;top:517.4px;">否</div>

<div class="t c td" style="left:596.2px;top:517.4px;">是</div>

<div class="t c td" style="left:663.1px;top:517.4px;">否</div>

<div class="t c td" style="left:728.6px;top:517.4px;">是</div>

<div class="t c td" style="left:794.6px;top:517.4px;">是</div>

<div class="t c td" style="left:860.9px;top:517.4px;">这里是文字</div>

<div class="t c td" style="left:926.7px;top:517.4px;">这里是文字</div>

<div class="t c td" style="left:992.6px;top:517.4px;">这里是文字</div>

<div class="row alt" style="top:526.55px"></div>
<div class="t c td" style="left:140px;top:537.25px;font-size:7.9px">08</div>

<div class="t c td" style="left:185.2px;top:537.25px;font-size:8px;transform:translateX(-50%) scaleX(.84)">USER_ENAME</div>

<div class="t c td" style="left:246.7px;top:537.25px;">用户英文名</div>

<div class="t c td" style="left:307.1px;top:537.25px;font-size:7.9px">7</div>

<div class="t c td" style="left:361px;top:537.25px;">字符串</div>

<div class="t c td" style="left:412.2px;top:537.25px;">文本框</div>

<div class="t c td" style="left:471px;top:537.25px;">--</div>

<div class="t c td" style="left:537.2px;top:537.25px;">否</div>

<div class="t c td" style="left:596.2px;top:537.25px;">是</div>

<div class="t c td" style="left:663.1px;top:537.25px;">否</div>

<div class="t c td" style="left:728.6px;top:537.25px;">是</div>

<div class="t c td" style="left:794.6px;top:537.25px;">是</div>

<div class="t c td" style="left:860.9px;top:537.25px;">这里是文字</div>

<div class="t c td" style="left:926.7px;top:537.25px;">这里是文字</div>

<div class="t c td" style="left:992.6px;top:537.25px;">这里是文字</div>

<div class="t c td" style="left:140px;top:557.1px;font-size:7.9px">09</div>

<div class="t c td" style="left:185.2px;top:557.1px;font-size:8px;transform:translateX(-50%) scaleX(.84)">USER_ID</div>

<div class="t c td" style="left:246.7px;top:557.1px;">用户编号</div>

<div class="t c td" style="left:307.1px;top:557.1px;font-size:7.9px">8</div>

<div class="t c td" style="left:361px;top:557.1px;">字符串</div>

<div class="t c td" style="left:412.2px;top:557.1px;">文本框</div>

<div class="t c td" style="left:471px;top:557.1px;">--</div>

<div class="t c td" style="left:537.2px;top:557.1px;">否</div>

<div class="t c td" style="left:596.2px;top:557.1px;">是</div>

<div class="t c td" style="left:663.1px;top:557.1px;">否</div>

<div class="t c td" style="left:728.6px;top:557.1px;">是</div>

<div class="t c td" style="left:794.6px;top:557.1px;">是</div>

<div class="t c td" style="left:860.9px;top:557.1px;">这里是文字</div>

<div class="t c td" style="left:926.7px;top:557.1px;">这里是文字</div>

<div class="t c td" style="left:992.6px;top:557.1px;">这里是文字</div>

<div class="abs" style="left:1046.1px;top:387.4px;width:3.3px;height:31px;background:#dbe4f8;border-radius:1.6px"></div>
<div class="abs" style="left:126.8px;top:565.6px;width:31.2px;height:2.8px;background:#dbe4f8;border-radius:1.4px"></div>
<div class="abs" style="left:109.1px;top:579px;width:949.5px;height:18px;background:#ecedef"></div>
<div class="abs" style="left:109.1px;top:579px;width:45.9px;height:18px;background:#e2e3e5"></div>
<div class="abs" style="left:155.4px;top:579px;width:50.1px;height:18px;background:#e2e3e5"></div>
<div class="abs" style="left:205.9px;top:579px;width:48.7px;height:18px;background:#e2e3e5"></div>
<div class="abs" style="left:255px;top:579px;width:51.2px;height:18px;background:#e2e3e5"></div>
<div class="abs" style="left:306.4px;top:579px;width:49.3px;height:18px;background:#3a84f3"></div>
<div class="t " style="left:121.6px;top:588.7px;color:#444;font-size:7.1px">主页</div>

<div class="t c " style="left:143.4px;top:588.3px;color:#444;font-size:10.6px">×</div>

<div class="t " style="left:164.4px;top:588.7px;color:#444;font-size:7.1px;letter-spacing:-.1px">1104系统</div>

<div class="t c " style="left:197.2px;top:588.3px;color:#444;font-size:10.6px">×</div>

<div class="t " style="left:214.3px;top:588.7px;color:#444;font-size:7.1px">系统管理</div>

<div class="t c " style="left:246.1px;top:588.3px;color:#444;font-size:10.6px">×</div>

<div class="t " style="left:264px;top:588.7px;color:#444;font-size:7.1px">现金统计</div>

<div class="t c " style="left:296.3px;top:588.3px;color:#444;font-size:10.6px">×</div>

<div class="t " style="left:314.1px;top:588.7px;color:#fff;font-size:7.1px">补录系统</div>

<div class="t c " style="left:346.7px;top:588.3px;color:#fff;font-size:10.6px">×</div>

<div class="t " style="left:475.2px;top:587.4px;color:#6e6e6e;font-size:6.56px">北京银丰新融科技开发有限公司版权所有 <span style="font-size:6.42px">Copyright(C) . All Rights Reserved</span></div>

<div class="abs" style="left:109.1px;top:0;width:2.2px;height:597px;background:#f6f6f9"></div>
</div>
</body>
</html>
